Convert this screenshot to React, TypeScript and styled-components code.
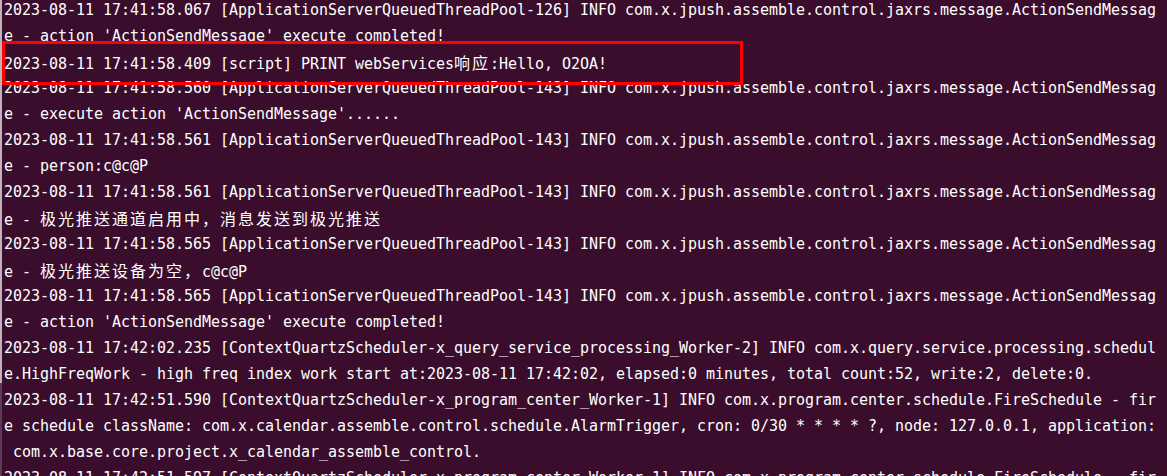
import React from "react";
import styled, { createGlobalStyle } from "styled-components";

const Global = createGlobalStyle`
  html, body { margin: 0; padding: 0; background: #3a0d2c; }
  #root { width: 1167px; height: 476px; }
`;

const Terminal = styled.div`
  position: relative;
  width: 1167px;
  height: 476px;
  overflow: hidden;
  box-sizing: border-box;
  padding-left: 4px;
  background:
    linear-gradient(#bdb3b9, #bdb3b9) no-repeat 0 0 / 2px 383px,
    linear-gradient(#5e3a55, #5e3a55) no-repeat 0 383px / 2px 100%,
    #3a0d2c;
  color: #ffffff;
  font-family: "DejaVu Sans Mono", "Liberation Mono", monospace;
  font-size: 15px;
  letter-spacing: -0.03px;
`;

const Log = styled.div`
  display: flex;
  flex-direction: column;
  margin-top: -3px;
`;

const Line = styled.div`
  height: 26px;
  line-height: 26px;
  white-space: pre;
`;

const Cjk = styled.span`
  font-family: "Noto Sans CJK SC", "DejaVu Sans", sans-serif;
  font-size: 16px;
  letter-spacing: 2px;
  line-height: 26px;
`;

const Highlight = styled.div`
  position: absolute;
  left: 2px;
  top: 41px;
  width: 741px;
  height: 44px;
  box-sizing: border-box;
  border: 3px solid #ff0000;
  pointer-events: none;
`;

type Part = string | { cjk: string };

const lines: Part[][] = [
  ["2023-08-11 17:41:58.067 [ApplicationServerQueuedThreadPool-126] INFO com.x.jpush.assemble.control.jaxrs.message.ActionSendMessag"],
  ["e - action 'ActionSendMessage' execute completed!"],
  ["2023-08-11 17:41:58.409 [script] PRINT webServices", { cjk: "响应" }, ":Hello, O2OA!"],
  ["2023-08-11 17:41:58.560 [ApplicationServerQueuedThreadPool-143] INFO com.x.jpush.assemble.control.jaxrs.message.ActionSendMessag"],
  ["e - execute action 'ActionSendMessage'......"],
  ["2023-08-11 17:41:58.561 [ApplicationServerQueuedThreadPool-143] INFO com.x.jpush.assemble.control.jaxrs.message.ActionSendMessag"],
  ["e - person:c@c@P"],
  ["2023-08-11 17:41:58.561 [ApplicationServerQueuedThreadPool-143] INFO com.x.jpush.assemble.control.jaxrs.message.ActionSendMessag"],
  ["e - ", { cjk: "极光推送通道启用中，消息发送到极光推送" }],
  ["2023-08-11 17:41:58.565 [ApplicationServerQueuedThreadPool-143] INFO com.x.jpush.assemble.control.jaxrs.message.ActionSendMessag"],
  ["e - ", { cjk: "极光推送设备为空，" }, "c@c@P"],
  ["2023-08-11 17:41:58.565 [ApplicationServerQueuedThreadPool-143] INFO com.x.jpush.assemble.control.jaxrs.message.ActionSendMessag"],
  ["e - action 'ActionSendMessage' execute completed!"],
  ["2023-08-11 17:42:02.235 [ContextQuartzScheduler-x_query_service_processing_Worker-2] INFO com.x.query.service.processing.schedul"],
  ["e.HighFreqWork - high freq index work start at:2023-08-11 17:42:02, elapsed:0 minutes, total count:52, write:2, delete:0."],
  ["2023-08-11 17:42:51.590 [ContextQuartzScheduler-x_program_center_Worker-1] INFO com.x.program.center.schedule.FireSchedule - fir"],
  ["e schedule className: com.x.calendar.assemble.control.schedule.AlarmTrigger, cron: 0/30 * * * * ?, node: 127.0.0.1, application:"],
  [" com.x.base.core.project.x_calendar_assemble_control."],
  ["2023-08-11 17:42:51.597 [ContextQuartzScheduler-x_program_center_Worker-1] INFO com.x.program.center.schedule.FireSchedule - fir"],
];

export default function App() {
  return (
    <>
      <Global />
      <Terminal>
        <Log>
          {lines.map((parts, i) => (
            <Line key={i}>
              {parts.map((p, j) =>
                typeof p === "string" ? (
                  <React.Fragment key={j}>{p}</React.Fragment>
                ) : (
                  <Cjk key={j}>{p.cjk}</Cjk>
                )
              )}
            </Line>
          ))}
        </Log>
        <Highlight />
      </Terminal>
    </>
  );
}
